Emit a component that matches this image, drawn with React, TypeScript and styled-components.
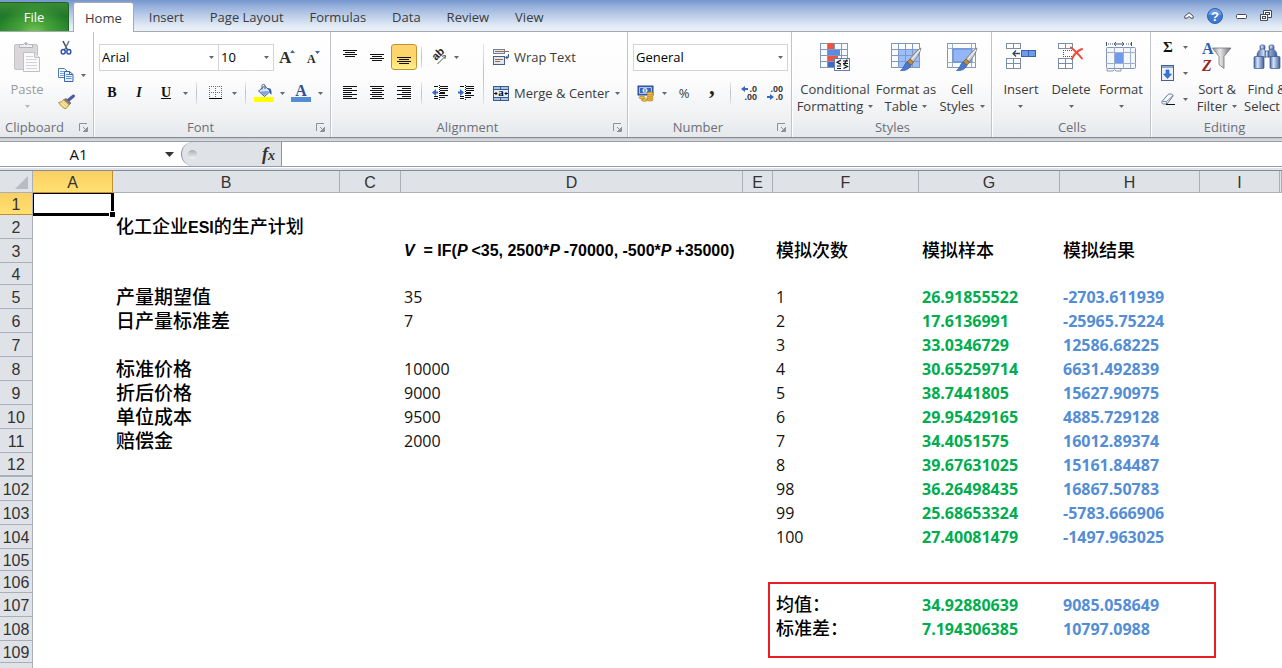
import React from 'react';
import styled, { createGlobalStyle, css } from 'styled-components';

const UI = '"Open Sans", "Noto Sans", sans-serif';
const SHEET = '"Liberation Sans", "Noto Sans CJK SC", sans-serif';
const CELL = '"Open Sans", "Noto Sans CJK SC", sans-serif';

const GlobalStyle = createGlobalStyle`
  *, *::before, *::after { box-sizing: border-box; }
  body { margin: 0; background: #fff; }
  button, input, select { font: inherit; color: inherit; margin: 0; padding: 0; border: 0; background: none; }
  svg { display: block; flex: none; overflow: visible; }
`;

const Window = styled.div`
  display: flex;
  flex-direction: column;
  height: 100vh;
  overflow: hidden;
  font-family: ${UI};
  font-size: 13px;
  color: #3b3b3b;
`;

/* ---------- tab strip ---------- */

const TabStrip = styled.header`
  display: flex;
  align-items: flex-end;
  height: 32px;
  flex: none;
  border-bottom: 1px solid #a6abb3;
  background: linear-gradient(#7597cf 0, #9db6de 8px, #c4d4ec 18px, #e6edf7 27px, #edf1f8 100%);
`;

const FileTab = styled.button`
  width: 69px;
  height: 29px;
  margin-right: 4px;
  border: 1px solid #1c6420;
  border-left: 0;
  border-bottom: 0;
  border-radius: 0 3px 0 0;
  color: #fff;
  background: radial-gradient(ellipse at 50% 120%, #86cf5e 0, #45a139 35%, rgba(63, 154, 53, 0) 75%),
    linear-gradient(#3b8a37, #22782a 45%, #2a8a2b);
`;

const Tab = styled.button<{ $active?: boolean }>`
  height: 29px;
  padding: 0 13px;
  ${(p) =>
    p.$active &&
    css`
      height: 30px;
      padding: 0 11px;
      margin-right: 2px;
      margin-bottom: -1px;
      border: 1px solid #a6abb3;
      border-bottom: 0;
      border-radius: 3px 3px 0 0;
      background: #fff;
    `}
`;

const WindowTools = styled.div`
  display: flex;
  align-items: center;
  height: 30px;
  margin-left: auto;
  padding-right: 4px;
`;

/* ---------- ribbon ---------- */

const Ribbon = styled.div`
  display: flex;
  flex: none;
  height: 106px;
  overflow: hidden;
  border-bottom: 1px solid #85898f;
  background: linear-gradient(#fff 0, #fcfcfd 50px, #eff1f3 85px, #e6e9ec 100%);
`;

const Group = styled.section<{ $width: number }>`
  display: flex;
  flex-direction: column;
  flex: none;
  width: ${(p) => p.$width}px;
  border-right: 1px solid #fff;
  box-shadow: inset -1px 0 #bfc4ca;
`;

const GroupBody = styled.div<{ $top: number; $left: number }>`
  display: flex;
  height: 86px;
  padding: ${(p) => `${p.$top}px 0 0 ${p.$left}px`};
`;

const GroupFooter = styled.footer<{ $launcher?: boolean }>`
  display: flex;
  align-items: center;
  gap: 12px;
  height: 18px;
  padding: 0 5px 0 ${(p) => (p.$launcher ? 4 : 5)}px;
  color: #6c6f78;
`;

const GroupTitle = styled.span`
  flex: 1;
  text-align: center;
`;

const LauncherButton = styled.button`
  display: grid;
  place-items: center;
  width: 12px;
  height: 12px;
`;

const Rows = styled.div<{ $gap?: number }>`
  display: flex;
  flex-direction: column;
  gap: ${(p) => p.$gap ?? 0}px;
`;

const ClipboardTools = styled(Rows)`
  gap: 1px;
  padding-top: 3px;
`;

const Row = styled.div`
  display: flex;
  align-items: center;
  height: 26px;
`;

const ToolButton = styled.button<{ $width?: number; $gapAfter?: boolean; $on?: boolean }>`
  display: grid;
  place-items: center;
  flex: none;
  width: ${(p) => p.$width ?? 26}px;
  height: 26px;
  margin-right: ${(p) => (p.$gapAfter ? 1 : 0)}px;
  ${(p) =>
    p.$on &&
    css`
      border: 1px solid #c29334;
      border-radius: 3px;
      background: linear-gradient(#fbd573, #fdd466 45%, #fff08c);
    `}
`;

const ArrowButton = styled.button`
  display: grid;
  place-items: center;
  flex: none;
  width: 10px;
  height: 26px;
`;

const Divider = styled.div<{ $before: number; $after: number; $height?: number }>`
  flex: none;
  width: 1px;
  height: ${(p) => p.$height ?? 22}px;
  margin: 0 ${(p) => p.$after}px 0 ${(p) => p.$before}px;
  background: linear-gradient(#e6e8eb, #b9bec6 50%, #e2e4e8);
`;

const FormatLetter = styled.span<{ $kind: 'bold' | 'italic' | 'underline' | 'symbol' }>`
  font: 700 14px/16px "Liberation Serif", serif;
  color: #111;
  ${(p) => p.$kind === 'italic' && 'font-style: italic;'}
  ${(p) => p.$kind === 'underline' && 'text-decoration: underline;'}
  ${(p) => p.$kind === 'symbol' && 'font-size: 15px;'}
`;

const ComboBox = styled.label<{ $width: number; $joined?: boolean }>`
  position: relative;
  display: flex;
  align-items: center;
  flex: none;
  width: ${(p) => p.$width}px;
  height: 27px;
  margin-left: ${(p) => (p.$joined ? -1 : 0)}px;
  border: 1px solid #d3d5d9;
  background: #fff;
  color: #000;

  select {
    appearance: none;
    width: 100%;
    height: 100%;
    padding: 0 16px 0 2px;
    outline: none;
  }
  svg {
    position: absolute;
    right: 4px;
    pointer-events: none;
  }
`;

const WideButton = styled.button`
  display: flex;
  align-items: center;
  gap: 5px;
  height: 26px;
  white-space: nowrap;
`;

const BigButton = styled.button<{ $width: number; $dim?: boolean }>`
  display: flex;
  flex-direction: column;
  align-items: center;
  gap: 9px;
  flex: none;
  width: ${(p) => p.$width}px;
  height: 74px;
  color: ${(p) => (p.$dim ? '#999ca1' : 'inherit')};
`;

const BigLabel = styled.span`
  display: flex;
  flex-direction: column;
  align-items: center;
  line-height: 17px;
  white-space: nowrap;
`;

const BigLine = styled.span`
  display: flex;
  align-items: center;
  gap: 5px;
  height: 17px;
`;

/* ---------- formula bar ---------- */

const Gutter = styled.div`
  flex: none;
  height: 3px;
  background: linear-gradient(#c3c6cb, #dcdfe4);
`;

const FormulaBar = styled.div`
  display: flex;
  flex: none;
  height: 26px;
  border-top: 1px solid #979ba3;
  border-bottom: 1px solid #979ba3;
`;

const NameBox = styled.div`
  display: flex;
  align-items: center;
  flex: none;
  width: 181px;
  font: 15px ${UI};
  color: #111;

  input {
    width: 157px;
    text-align: center;
    outline: none;
  }
`;

const NameArrow = styled.button`
  display: grid;
  place-items: center;
  width: 24px;
  height: 24px;
`;

const FunctionZone = styled.div`
  display: flex;
  align-items: center;
  justify-content: space-between;
  flex: none;
  width: 101px;
  padding: 0 6px;
  border: 1px solid #8f949c;
  border-width: 0 1px;
  border-radius: 13px 0 0 13px;
  background: #dfe2e7;
`;

const Knob = styled.span`
  width: 9px;
  height: 9px;
  border-radius: 50%;
  background: linear-gradient(#a9adb3, #f4f5f6);
`;

const FunctionButton = styled.button`
  font: italic 700 18px/20px "Liberation Serif", serif;
  color: #333;

  sub {
    font-size: 14px;
    line-height: 1px;
    vertical-align: baseline;
  }
`;

const FormulaInput = styled.input`
  flex: 1;
  min-width: 0;
  outline: none;
`;

const SheetEdge = styled.div`
  flex: none;
  height: 4px;
  border-top: 1px solid #fff;
  border-bottom: 1px solid #868a96;
  background: #dfe3ef;
`;

/* ---------- sheet ---------- */

const Sheet = styled.div`
  flex: 1;
  min-height: 0;
  overflow: hidden;
`;

const Grid = styled.table`
  width: 100%;
  table-layout: fixed;
  border-collapse: separate;
  border-spacing: 0;
  font: 16px/20px ${CELL};
  color: #111;

  th, td { padding: 0; text-align: left; font-weight: 400; }
`;

const HeadCell = styled.th<{ $current?: boolean; $axis: 'col' | 'row'; $folded?: boolean }>`
  && {
    padding-top: 2px;
    text-align: center;
    font-family: ${SHEET};
    line-height: 18px;
    color: #333;
    white-space: nowrap;
  }
  border-right: 1px solid ${(p) => (p.$current && p.$axis === 'col' ? '#c58f2c' : '#abafb6')};
  border-bottom: ${(p) => (p.$folded ? 2 : 1)}px solid ${(p) => (p.$current ? '#c58f2c' : '#abafb6')};
  background: ${(p) => (p.$current ? 'linear-gradient(#fbd062, #ffe070)' : '#dfe2e7')};
`;

const CornerMark = styled.svg`
  margin: 0 4px 0 auto;
`;

type Tone = 'plain' | 'green' | 'blue' | 'heading' | 'label' | 'formula';

const tones = {
  plain: css``,
  green: css`font-weight: 700; color: #00ad4e;`,
  blue: css`font-weight: 700; color: #538dd5;`,
  heading: css`font-family: ${SHEET}; font-size: 18px; font-weight: 500; color: #000;`,
  label: css`padding-top: 2px; font-family: ${SHEET}; font-size: 19px; font-weight: 500; color: #000;`,
  formula: css`font-family: ${SHEET}; font-weight: 700; color: #000;`,
};

const CellText = styled.div<{ $tone: Tone }>`
  padding-left: 3px;
  white-space: pre;
  line-height: 20px;
  ${(p) => tones[p.$tone]}
`;

const Latin = styled.b`
  font-size: 16px;
`;

const Anchor = styled.td`
  position: relative;
`;

const Selection = styled.div`
  position: absolute;
  inset: 0 -1px -1px 0;
  border: solid #000;
  border-width: 1px 3px 3px 1px;

  &::after {
    content: '';
    position: absolute;
    right: -4px;
    bottom: -4px;
    width: 6px;
    height: 6px;
    border: solid #fff;
    border-width: 1px 0 0 1px;
    background: #000;
  }
`;

const ResultFrame = styled.div`
  position: absolute;
  left: -5px;
  top: 11px;
  width: 448px;
  height: 76px;
  border: 2px solid #ec1c24;
  pointer-events: none;
`;

const Tr = styled.tr<{ $h: number }>`
  height: ${(p) => p.$h}px;
`;

/* ---------- drawings ---------- */

const Arrow = ({ color = '#666' }: { color?: string }) => (
  <svg width="5" height="3" viewBox="0 0 5 3" aria-hidden="true">
    <path d="M0 0h5L2.5 3z" fill={color} />
  </svg>
);

const LauncherIcon = () => (
  <svg width="9" height="9" viewBox="0 0 9 9" fill="none" stroke="#8d9096" aria-hidden="true">
    <path d="M.5 8V.5H8" />
    <path d="M8.500 4v4.500H4M4 4l3 3" />
    <path d="M5 7.500h3M7.500 5v3" />
  </svg>
);

const PasteIcon = () => (
  <svg width="28" height="30" viewBox="0 0 28 30" aria-hidden="true">
    <rect x="1.500" y="2.500" width="23" height="25" rx="1.500" fill="#d9d7da" stroke="#c3c1c4" />
    <path d="M6.500 5.500v-3h4a2.700 2.700 0 0 1 5 0h4v3z" fill="#f0f0f1" stroke="#b3b2b6" />
    <circle cx="13" cy="2" r="1.200" fill="#b3b2b6" />
    <path d="M10.500 10.500h11l5 5v14h-16z" fill="#fafafa" stroke="#bfbfc4" />
    <path d="M21.500 10.500v5h5" fill="#e6e6e8" stroke="#bfbfc4" />
    <path d="M13 14.500h7M13 17.500h11M13 20.500h11M13 23.500h11M13 26.500h11" stroke="#d2d2d7" />
  </svg>
);

const CutIcon = () => (
  <svg width="12" height="14" viewBox="0 0 12 14" fill="none" aria-hidden="true">
    <path d="M3 0l4.500 9" stroke="#3f4a5c" strokeWidth="1.500" />
    <path d="M9 0L4.500 9" stroke="#6b7688" strokeWidth="1.500" />
    <ellipse cx="3.200" cy="10.700" rx="2" ry="2.300" stroke="#2f55a8" strokeWidth="1.500" />
    <ellipse cx="8.800" cy="10.700" rx="2" ry="2.300" stroke="#2f55a8" strokeWidth="1.500" />
  </svg>
);

const CopyIcon = () => (
  <svg width="16" height="14" viewBox="0 0 16 14" aria-hidden="true">
    <path d="M.5.500h6l3 3v6h-9z" fill="#f2f7fe" stroke="#5279b8" />
    <path d="M2 3.500h4M2 5.500h6M2 7.500h6" stroke="#7ea3dd" />
    <path d="M6.500 3.500h5l3.500 3v7H6.500z" fill="#eaf2fd" stroke="#3563ac" />
    <path d="M8 6.500h3M8 8.500h5.500M8 10.500h5.500" stroke="#5f8cd3" />
    <path d="M11.500 3.500v3H15" fill="none" stroke="#3563ac" />
  </svg>
);

const PainterIcon = () => (
  <svg width="17" height="14" viewBox="0 0 17 14" aria-hidden="true">
    <path d="M15.500 1L10 5.500" stroke="#5158a8" strokeWidth="3" strokeLinecap="round" />
    <path d="M8 3.500l5 4.500-2 2-5.500-5z" fill="#7b7f88" stroke="#54565c" strokeWidth=".6" />
    <path d="M5.500 4.500l5.500 5c-.5 2-2.500 4-4 4.200C4.500 12.500 2 10 .5 7.500c2-.2 4-1 5-3z" fill="#f0d27c" stroke="#a5803a" strokeWidth=".8" />
    <path d="M3 8l4 4M5 6.800l4 3.700" stroke="#fdf3c4" />
  </svg>
);

const GrowFontIcon = ({ small }: { small?: boolean }) => (
  <svg width="16" height="18" viewBox="0 0 16 18" aria-hidden="true">
    <text x={small ? 1 : 0} y="15" fontFamily="Liberation Serif, serif" fontWeight="700" fontSize={small ? 12 : 17} fill="#2c2c2c">A</text>
    <path d={small ? 'M9 3h5l-2.500 3z' : 'M11 5h5l-2.500-3z'} fill="#3b63b5" />
  </svg>
);

const BorderIcon = () => (
  <svg width="14" height="14" viewBox="0 0 14 14" fill="none" aria-hidden="true">
    <path d="M0 .5h13M0 6.500h13M.5 0v12M6.500 0v12M12.500 0v12" stroke="#6b6b6b" strokeDasharray="1 1" />
    <path d="M0 12.500h13" stroke="#000" />
  </svg>
);

const FillIcon = () => (
  <svg width="20" height="18" viewBox="0 0 20 18" aria-hidden="true">
    <path d="M4.500 7l6-5 6 5-6 5.500z" fill="#d7e4f7" stroke="#405f94" />
    <path d="M6 7.500l9-.5-4.500 4.500z" fill="#7da5dd" />
    <path d="M8 5.500V1.500c0-1.500 3-1.500 3 0V5" fill="none" stroke="#51607b" />
    <path d="M14 4c2.500 0 4 2 3.500 6.500-1.500-.5-2-2-2.200-3.500z" fill="#2e5da9" />
    <rect y="13" width="20" height="5" fill="#ff0" />
  </svg>
);

const FontColorIcon = () => (
  <svg width="20" height="18" viewBox="0 0 20 18" aria-hidden="true">
    <text x="10" y="12" textAnchor="middle" fontFamily="Liberation Serif, serif" fontWeight="700" fontSize="16" fill="#2f4f8f">A</text>
    <rect y="13" width="20" height="5" fill="#538dd5" />
  </svg>
);

const lineSets = {
  top: 'M0 2.500h14M2 4.500h10M0 6.500h14M2 8.500h10',
  middle: 'M0 6.500h14M2 8.500h10M0 10.500h14M2 12.500h10',
  bottom: 'M0 9.500h14M2 11.500h10M0 13.500h14M2 15.500h10',
  left: 'M0 2.500h14M0 4.500h9M0 6.500h14M0 8.500h9M0 10.500h14M0 12.500h9M0 14.500h14',
  center: 'M0 2.500h14M2 4.500h10M0 6.500h14M2 8.500h10M0 10.500h14M2 12.500h10M0 14.500h14',
  right: 'M0 2.500h14M5 4.500h9M0 6.500h14M5 8.500h9M0 10.500h14M5 12.500h9M0 14.500h14',
};

const LinesIcon = ({ kind }: { kind: keyof typeof lineSets }) => (
  <svg width="14" height="18" viewBox="0 0 14 18" fill="none" stroke="#111" aria-hidden="true">
    <path d={lineSets[kind]} />
  </svg>
);

const OrientationIcon = () => (
  <svg width="16" height="16" viewBox="0 0 16 16" aria-hidden="true">
    <text x="0" y="0" transform="translate(5 12) rotate(-45)" fontFamily="Liberation Sans, sans-serif" fontWeight="700" fontSize="11" fill="#222">ab</text>
    <path d="M6.500 15L14 7.500M14.500 6.500l-3.500.7M14.500 6.500l-.6 3.500" stroke="#555" fill="none" />
  </svg>
);

const IndentIcon = ({ out }: { out?: boolean }) => (
  <svg width="16" height="18" viewBox="0 0 16 18" fill="none" aria-hidden="true">
    <path d="M2 2.500h4M8 2.500h8M8 4.500h8M8 6.500h8M8 8.500h5M8 9.500h5M8 11.500h8M2 12.500h4M8 13.500h5M2 14.500h4" stroke="#111" />
    <path d="M7.500 1v16" stroke="#111" strokeDasharray="1 1" />
    <path d={out ? 'M0 8.500l4-3.500v7z' : 'M6 8.500L2 5v7z'} fill="#3567c4" />
    <path d={out ? 'M3 8.500h3' : 'M0 8.500h3'} stroke="#3567c4" strokeWidth="2" />
  </svg>
);

const WrapIcon = () => (
  <svg width="16" height="16" viewBox="0 0 16 16" fill="none" aria-hidden="true">
    <rect x=".5" y=".5" width="11" height="4" fill="#dfe7f2" stroke="#6e819b" />
    <path d="M2 2.500h14" stroke="#a46a3c" />
    <rect x=".5" y="7.500" width="11" height="8" fill="#dfe7f2" stroke="#435f8c" />
    <path d="M2 10.500h8M2 12.500h5" stroke="#a46a3c" />
    <path d="M15.500 5v3.500H13" stroke="#3a5c94" />
    <path d="M12 8.500l2.500-2.300v4.600z" fill="#3a5c94" />
  </svg>
);

const MergeIcon = () => (
  <svg width="16" height="15" viewBox="0 0 16 15" aria-hidden="true">
    <rect x=".5" y=".5" width="15" height="14" fill="#a9c2e8" stroke="#3c5a8d" />
    <path d="M1 3.500h14M1 11.500h14M7.500 1v2.500M7.500 11.500V14" stroke="#3c5a8d" />
    <rect x="1" y="4" width="14" height="7" fill="#e4ecf8" />
    <text x="8" y="10" textAnchor="middle" fontFamily="Liberation Serif, serif" fontWeight="700" fontSize="11" fill="#111">a</text>
    <path d="M1 7.500h3M12 7.500h3M2.500 6L4 7.500 2.500 9M13.500 6L12 7.500 13.500 9" fill="none" stroke="#111" />
  </svg>
);

const CurrencyIcon = () => (
  <svg width="18" height="17" viewBox="0 0 18 17" aria-hidden="true">
    <rect x="1" y="1" width="15" height="9" fill="#3c68b8" stroke="#294b8c" />
    <path d="M2.500 2.500h12v6h-12z" fill="none" stroke="#a9c4ee" />
    <circle cx="8" cy="5.500" r="2.500" fill="#d7e4f8" />
    <path d="M8 4v3.500" stroke="#3c68b8" />
    <g fill="#f6c544" stroke="#a5731a" strokeWidth=".7">
      <ellipse cx="13" cy="14.500" rx="3" ry="1.500" />
      <ellipse cx="13" cy="12.500" rx="3" ry="1.500" />
      <ellipse cx="13" cy="10.500" rx="3" ry="1.500" />
      <ellipse cx="13" cy="8.500" rx="3" ry="1.500" />
      <ellipse cx="7.500" cy="15" rx="3" ry="1.300" />
      <ellipse cx="5" cy="12.500" rx="3" ry="1.300" />
    </g>
  </svg>
);

const CommaIcon = () => (
  <svg width="6" height="10" viewBox="0 0 6 10" aria-hidden="true">
    <text x="0" y="6" fontFamily="Liberation Serif, serif" fontWeight="700" fontSize="23" fill="#222">,</text>
  </svg>
);

const DecimalIcon = ({ less }: { less?: boolean }) => (
  <svg width="18" height="16" viewBox="0 0 18 16" aria-hidden="true">
    <g fontFamily="Liberation Sans, sans-serif" fontWeight="700" fontSize="9" fill="#333" textAnchor="end">
      <text x="16" y="7">{less ? '.00' : '.0'}</text>
      <text x="16" y="15">{less ? '.0' : '.00'}</text>
    </g>
    {less ? (
      <path d="M0 11h3V9l4 3-4 3v-2H0z" fill="#3567c4" />
    ) : (
      <path d="M7 3H4V1L0 4l4 3V5h3z" fill="#3567c4" />
    )}
  </svg>
);

const PaintBrush = () => (
  <g>
    <path d="M30 6c-3 1-8 7-11 11l3 3C26 16 29 11 30 6z" fill="#c9c9cd" stroke="#77777c" strokeWidth=".8" />
    <path d="M29 8l-8.500 9.500" stroke="#fff" />
    <path d="M19 17l3.500 3-2.500 3.500-4-3.500z" fill="#b98b45" stroke="#7b5523" strokeWidth=".7" />
    <path d="M16 20l4 3.500c-2 4-6 5.500-10.500 5C13 26.500 13 22 16 20z" fill="#4a7ad0" stroke="#2c54a0" strokeWidth=".7" />
  </g>
);

const ConditionalIcon = () => (
  <svg width="30" height="30" viewBox="0 0 30 30" aria-hidden="true">
    <rect x=".5" y="1.500" width="27" height="24" fill="#f8fafd" stroke="#8398b8" />
    <path d="M0 7.500h28M0 13.500h28M0 19.500h28M7.500 1v25M14.500 1v25M21.500 1v25" stroke="#8398b8" />
    <rect x="8" y="1" width="6" height="6" fill="#ee5340" />
    <rect x="8" y="8" width="12" height="5" fill="#5b8ae4" />
    <rect x="8" y="14" width="10" height="5" fill="#ee5340" />
    <rect x="8" y="20" width="6" height="5" fill="#3d6cc6" />
    <rect x="14.500" y="16.500" width="15" height="12" fill="#f6f9fd" stroke="#6480a8" />
    <path d="M21 18l-4 2.200 4 2.200M17 24h4M17 26.500h4M23 19h5M23 21.500h5M27 17.500l-3 5M23.500 22.500l4 2-4 2" fill="none" stroke="#111" strokeWidth="1.200" />
  </svg>
);

const FormatTableIcon = () => (
  <svg width="31" height="30" viewBox="0 0 31 30" aria-hidden="true">
    <rect x=".5" y="1.500" width="28" height="24" fill="#fbfcfe" stroke="#8398b8" />
    <rect x="8" y="8" width="20" height="17" fill="#9dbdf8" />
    <path d="M0 7.500h29M0 13.500h29M0 19.500h29M7.500 1v25M14.500 1v25M21.500 1v25" stroke="#7f9ac6" />
    <PaintBrush />
  </svg>
);

const CellStylesIcon = () => (
  <svg width="31" height="30" viewBox="0 0 31 30" aria-hidden="true">
    <rect x=".5" y="1.500" width="28" height="24" fill="#fbfcfe" stroke="#8398b8" />
    <path d="M0 6.500h29M0 20.500h29M5.500 1v25M24.500 1v25" stroke="#9aacc8" />
    <rect x="6" y="7" width="19" height="13" fill="#94b6f6" stroke="#5a86d6" />
    <PaintBrush />
  </svg>
);

const MiniGrid = ({ y, rows }: { y: number; rows: number }) => (
  <g fill="#fff" stroke="#7b8ea9">
    <rect x=".5" y={y} width="14" height={rows * 5} />
    <path d={`M7.500 ${y}v${rows * 5}${rows > 1 ? `M0 ${y + 5}h15` : ''}`} />
  </g>
);

const InsertCellsIcon = () => (
  <svg width="30" height="30" viewBox="0 0 30 30" aria-hidden="true">
    <MiniGrid y={1.5} rows={1} />
    <MiniGrid y={16.5} rows={2} />
    <rect x="15.500" y="8.500" width="14" height="6" fill="#6f9aeb" stroke="#3a61ab" />
    <path d="M22.500 8.500v6" stroke="#3a61ab" />
    <path d="M14 11.500H7M10 8.500l-3 3 3 3" fill="none" stroke="#3b4657" strokeWidth="1.300" />
  </svg>
);

const DeleteCellsIcon = () => (
  <svg width="26" height="30" viewBox="0 0 26 30" aria-hidden="true">
    <MiniGrid y={1.5} rows={1} />
    <MiniGrid y={16.5} rows={2} />
    <path d="M5 8.500h9M5 14.500h9M5.500 8v7" fill="none" stroke="#2b59b5" strokeDasharray="1 1" />
    <path d="M13 5.500c4 3 7 6 11 11M24 7c-5 2-8 5-10 10" fill="none" stroke="#ee4a35" strokeWidth="2" strokeLinecap="round" />
  </svg>
);

const FormatCellsIcon = () => (
  <svg width="31" height="30" viewBox="0 0 31 30" aria-hidden="true">
    <path d="M.5 0v4M25.500 0v4" stroke="#46546b" />
    <path d="M2 2h5M20 2h5" stroke="#46546b" strokeDasharray="1 1" />
    <path d="M8 2h10M10 0L8 2l2 2M16 0l2 2-2 2" fill="none" stroke="#46546b" />
    <rect x=".5" y="5.500" width="29" height="21" rx="1" fill="#f3f6fb" stroke="#8095b3" />
    <path d="M0 10.500h30M0 21.500h30M8.500 5v21M17.500 5v21M24.500 5v21" stroke="#9fb0c8" />
    <rect x="9" y="11" width="8" height="10" fill="#6f9bef" />
    <path d="M1 27v2h6l1.500-1.500L10 29h5v-2" fill="#fff" stroke="#8095b3" />
  </svg>
);

const FillDownIcon = () => (
  <svg width="14" height="16" viewBox="0 0 14 16" aria-hidden="true">
    <rect x=".5" y=".5" width="12" height="15" fill="#eaf1fb" stroke="#44628f" />
    <path d="M1 2h11" stroke="#8ba7d2" strokeWidth="2" />
    <path d="M5 5h3v4h2.500l-4 4.500L2.500 9H5z" fill="#3a72dc" stroke="#2454ab" strokeWidth=".6" />
  </svg>
);

const EraserIcon = () => (
  <svg width="14" height="13" viewBox="0 0 14 13" aria-hidden="true">
    <path d="M1 8.500L7 1.500c1-1 5.500-.5 5 1.500l-6 8H2.500C1 11 .5 9.500 1 8.500z" fill="#f6f8fc" stroke="#63769c" />
    <path d="M1.500 8.500H5.500L12 2.500M5.500 8.500v2.500" fill="none" stroke="#63769c" strokeWidth=".8" />
    <path d="M5 11.500h9" stroke="#111" />
  </svg>
);

const SortIcon = () => (
  <svg width="30" height="30" viewBox="0 0 30 30" aria-hidden="true">
    <defs>
      <linearGradient id="funnel">
        <stop offset="0" stopColor="#8d8d90" />
        <stop offset=".4" stopColor="#e9e9ea" />
        <stop offset="1" stopColor="#6d6d70" />
      </linearGradient>
    </defs>
    <path d="M10.500 6h18.500l-7 8.500v12l-5-4v-8z" fill="url(#funnel)" stroke="#77777a" strokeWidth=".8" />
    <g fontFamily="Liberation Serif, serif" fontWeight="700" fontSize="16">
      <text x="0" y="12" fill="#2d5cae">A</text>
      <text x="0" y="29" fontStyle="italic" fill="#97261f">Z</text>
    </g>
  </svg>
);

const FindIcon = () => (
  <svg width="28" height="30" viewBox="0 0 28 30" aria-hidden="true">
    <defs>
      <linearGradient id="barrel">
        <stop offset="0" stopColor="#4566a3" />
        <stop offset=".35" stopColor="#d6e3f7" />
        <stop offset="1" stopColor="#3c5d9c" />
      </linearGradient>
    </defs>
    <g fill="url(#barrel)" stroke="#3a578d" strokeWidth=".7">
      <rect x="7" y="3" width="5" height="5" rx="1.500" />
      <rect x="16" y="3" width="5" height="5" rx="1.500" />
      <path d="M4 14c0-4 2-6 4-7h3l2 3v5H4zM24 14c0-4-2-6-4-7h-3l-2 3v5h9z" />
      <rect x="12" y="9" width="4" height="6" />
      <rect x="1" y="14.500" width="10" height="12" rx="1" />
      <rect x="17" y="14.500" width="10" height="12" rx="1" />
    </g>
  </svg>
);

const CollapseIcon = () => (
  <svg width="10" height="8" viewBox="0 0 10 8" aria-hidden="true">
    <path d="M5 .700L9.200 4.200v2H7L5 4.500 3 6.200H.8v-2z" fill="#fff" stroke="#444b57" />
  </svg>
);

const HelpIcon = () => (
  <svg width="16" height="16" viewBox="0 0 16 16" aria-hidden="true">
    <circle cx="8" cy="8" r="7.500" fill="#3f7ad0" stroke="#2b5fae" />
    <path d="M1.500 7a6.500 6 0 0 1 13 0z" fill="#6b9ade" />
    <text x="8" y="13" textAnchor="middle" fontFamily="Liberation Sans, sans-serif" fontWeight="700" fontSize="13" fill="#fff">?</text>
  </svg>
);

const MinimizeIcon = () => (
  <svg width="11" height="5" viewBox="0 0 11 5" aria-hidden="true">
    <rect x=".5" y=".5" width="10" height="4" rx="1" fill="#fff" stroke="#444b57" />
  </svg>
);

const RestoreIcon = () => (
  <svg width="12" height="12" viewBox="0 0 12 12" aria-hidden="true">
    <path d="M3.500.500h8v7h-8z" fill="#fff" stroke="#444b57" />
    <rect x="5.500" y="2.500" width="4" height="2" fill="none" stroke="#444b57" />
    <path d="M.5 4.500h7v6h-7z" fill="#fff" stroke="#444b57" />
    <rect x="2.500" y="6.500" width="3" height="2" fill="none" stroke="#444b57" />
  </svg>
);

/* ---------- composed parts ---------- */

const Footer = ({ title, launcher }: { title: string; launcher?: boolean }) => (
  <GroupFooter $launcher={launcher}>
    <GroupTitle>{title}</GroupTitle>
    {launcher && (
      <LauncherButton aria-label={`${title} settings`}>
        <LauncherIcon />
      </LauncherButton>
    )}
  </GroupFooter>
);

const Menu = ({ label }: { label: string }) => (
  <ArrowButton aria-label={label}>
    <Arrow />
  </ArrowButton>
);

type BigProps = {
  icon: React.ReactNode;
  lines: string[];
  width: number;
  dim?: boolean;
};

const Big = ({ icon, lines, width, dim }: BigProps) => (
  <BigButton $width={width} $dim={dim}>
    {icon}
    <BigLabel>
      <BigLine>{lines[0]}</BigLine>
      <BigLine>
        {lines[1]}
        <Arrow color={dim ? '#b5b7ba' : undefined} />
      </BigLine>
    </BigLabel>
  </BigButton>
);

const Combo = ({ label, value, width, joined }: { label: string; value: string; width: number; joined?: boolean }) => (
  <ComboBox $width={width} $joined={joined}>
    <select aria-label={label} defaultValue={value}>
      <option>{value}</option>
    </select>
    <Arrow />
  </ComboBox>
);

const columns: [string, number][] = [
  ['A', 80], ['B', 227], ['C', 61], ['D', 342], ['E', 30], ['F', 146], ['G', 141], ['H', 140], ['I', 80],
];

type Entry = [React.ReactNode, Tone];
type SheetRow = { n: string; h: number; cells?: Record<string, Entry> };

const trial = (n: string, count: string, sample: string, result: string, extra: Record<string, Entry> = {}): SheetRow => ({
  n,
  h: 24,
  cells: { ...extra, F: [count, 'plain'], G: [sample, 'green'], H: [result, 'blue'] },
});

const param = (name: string, value: string): Record<string, Entry> => ({ B: [name, 'label'], D: [value, 'plain'] });

const rows: SheetRow[] = [
  { n: '1', h: 22 },
  { n: '2', h: 24, cells: { B: [<>化工企业<Latin>ESI</Latin>的生产计划</>, 'heading'] } },
  {
    n: '3',
    h: 24,
    cells: {
      D: [<><i>V</i>{'  = IF('}<i>P </i>{'<35, 2500*'}<i>P </i>{'-70000, -500*'}<i>P </i>+35000)</>, 'formula'],
      F: ['模拟次数', 'heading'],
      G: ['模拟样本', 'heading'],
      H: ['模拟结果', 'heading'],
    },
  },
  { n: '4', h: 22 },
  trial('5', '1', '26.91855522', '-2703.611939', param('产量期望值', '35')),
  trial('6', '2', '17.6136991', '-25965.75224', param('日产量标准差', '7')),
  trial('7', '3', '33.0346729', '12586.68225'),
  trial('8', '4', '30.65259714', '6631.492839', param('标准价格', '10000')),
  trial('9', '5', '38.7441805', '15627.90975', param('折后价格', '9000')),
  trial('10', '6', '29.95429165', '4885.729128', param('单位成本', '9500')),
  trial('11', '7', '34.4051575', '16012.89374', param('赔偿金', '2000')),
  trial('12', '8', '39.67631025', '15161.84487'),
  trial('102', '98', '36.26498435', '16867.50783'),
  trial('103', '99', '25.68653324', '-5783.666906'),
  trial('104', '100', '27.40081479', '-1497.963025'),
  { n: '105', h: 22 },
  { n: '106', h: 22 },
  { n: '107', h: 24, cells: { F: ['均值：', 'heading'], G: ['34.92880639', 'green'], H: ['9085.058649', 'blue'] } },
  { n: '108', h: 24, cells: { F: ['标准差：', 'heading'], G: ['7.194306385', 'green'], H: ['10797.0988', 'blue'] } },
  { n: '109', h: 22 },
  { n: '', h: 22 },
];

const SheetCell = ({ row, col }: { row: SheetRow; col: string }) => {
  if (row.n === '1' && col === 'A') return <Anchor><Selection /></Anchor>;
  if (row.n === '106' && col === 'F') return <Anchor><ResultFrame /></Anchor>;
  const entry = row.cells?.[col];
  return <td>{entry && <CellText $tone={entry[1]}>{entry[0]}</CellText>}</td>;
};

export default function App() {
  return (
    <Window>
      <GlobalStyle />
      <TabStrip>
        <FileTab>File</FileTab>
        <Tab $active>Home</Tab>
        {['Insert', 'Page Layout', 'Formulas', 'Data', 'Review', 'View'].map((name) => (
          <Tab key={name}>{name}</Tab>
        ))}
        <WindowTools>
          <ToolButton aria-label="Minimize the ribbon"><CollapseIcon /></ToolButton>
          <ToolButton aria-label="Help"><HelpIcon /></ToolButton>
          <ToolButton aria-label="Minimize window"><MinimizeIcon /></ToolButton>
          <ToolButton aria-label="Restore window" $width={24}><RestoreIcon /></ToolButton>
        </WindowTools>
      </TabStrip>

      <Ribbon>
        <Group $width={95}>
          <GroupBody $top={0} $left={0}>
            <GroupBody $top={10} $left={0}>
              <Big dim width={54} lines={['Paste', '']} icon={<PasteIcon />} />
            </GroupBody>
            <ClipboardTools>
              <Row><ToolButton $width={24} aria-label="Cut"><CutIcon /></ToolButton></Row>
              <Row>
                <ToolButton $width={24} aria-label="Copy"><CopyIcon /></ToolButton>
                <Menu label="Copy options" />
              </Row>
              <Row><ToolButton $width={24} aria-label="Format Painter"><PainterIcon /></ToolButton></Row>
            </ClipboardTools>
          </GroupBody>
          <Footer title="Clipboard" launcher />
        </Group>

        <Group $width={237}>
          <GroupBody $top={12} $left={4}>
            <Rows $gap={10}>
              <Row>
                <Combo label="Font" value="Arial" width={120} />
                <Combo label="Font size" value="10" width={56} joined />
                <ToolButton $gapAfter aria-label="Increase font size"><GrowFontIcon /></ToolButton>
                <ToolButton aria-label="Decrease font size"><GrowFontIcon small /></ToolButton>
              </Row>
              <Row>
                <ToolButton $gapAfter aria-label="Bold"><FormatLetter $kind="bold">B</FormatLetter></ToolButton>
                <ToolButton $gapAfter aria-label="Italic"><FormatLetter $kind="italic">I</FormatLetter></ToolButton>
                <ToolButton $gapAfter aria-label="Underline"><FormatLetter $kind="underline">U</FormatLetter></ToolButton>
                <Menu label="Underline options" />
                <Divider $before={6} $after={6} />
                <ToolButton aria-label="Bottom border"><BorderIcon /></ToolButton>
                <Menu label="Border options" />
                <Divider $before={6} $after={5} />
                <ToolButton aria-label="Fill color"><FillIcon /></ToolButton>
                <Menu label="Fill color options" />
                <ToolButton $width={28} aria-label="Font color"><FontColorIcon /></ToolButton>
                <Menu label="Font color options" />
              </Row>
            </Rows>
          </GroupBody>
          <Footer title="Font" launcher />
        </Group>

        <Group $width={297}>
          <GroupBody $top={12} $left={5}>
            <Rows $gap={10}>
              <Row>
                <ToolButton $gapAfter aria-label="Top align"><LinesIcon kind="top" /></ToolButton>
                <ToolButton $gapAfter aria-label="Middle align"><LinesIcon kind="middle" /></ToolButton>
                <ToolButton $on aria-label="Bottom align" aria-pressed="true"><LinesIcon kind="bottom" /></ToolButton>
                <Divider $before={4} $after={5} />
                <ToolButton $width={24} aria-label="Orientation"><OrientationIcon /></ToolButton>
                <Menu label="Orientation options" />
              </Row>
              <Row>
                <ToolButton $gapAfter aria-label="Align left"><LinesIcon kind="left" /></ToolButton>
                <ToolButton $gapAfter aria-label="Center"><LinesIcon kind="center" /></ToolButton>
                <ToolButton aria-label="Align right"><LinesIcon kind="right" /></ToolButton>
                <Divider $before={4} $after={5} />
                <ToolButton aria-label="Decrease indent"><IndentIcon out /></ToolButton>
                <ToolButton aria-label="Increase indent"><IndentIcon /></ToolButton>
              </Row>
            </Rows>
            <Divider $before={4} $after={9} $height={60} />
            <Rows $gap={10}>
              <WideButton><WrapIcon />Wrap Text</WideButton>
              <WideButton><MergeIcon />Merge &amp; Center<Arrow /></WideButton>
            </Rows>
          </GroupBody>
          <Footer title="Alignment" launcher />
        </Group>

        <Group $width={164}>
          <GroupBody $top={12} $left={4}>
            <Rows $gap={10}>
              <Row><Combo label="Number format" value="General" width={155} /></Row>
              <Row>
                <ToolButton aria-label="Accounting format"><CurrencyIcon /></ToolButton>
                <Menu label="Accounting options" />
                <ToolButton $width={30} aria-label="Percent style">%</ToolButton>
                <ToolButton aria-label="Comma style"><CommaIcon /></ToolButton>
                <Divider $before={5} $after={6} />
                <ToolButton aria-label="Increase decimal"><DecimalIcon /></ToolButton>
                <ToolButton aria-label="Decrease decimal"><DecimalIcon less /></ToolButton>
              </Row>
            </Rows>
          </GroupBody>
          <Footer title="Number" launcher />
        </Group>

        <Group $width={200}>
          <GroupBody $top={10} $left={5}>
            <Big width={74} lines={['Conditional', 'Formatting']} icon={<ConditionalIcon />} />
            <Big width={68} lines={['Format as', 'Table']} icon={<FormatTableIcon />} />
            <Big width={44} lines={['Cell', 'Styles']} icon={<CellStylesIcon />} />
          </GroupBody>
          <Footer title="Styles" />
        </Group>

        <Group $width={159}>
          <GroupBody $top={10} $left={3}>
            <Big width={50} lines={['Insert', '']} icon={<InsertCellsIcon />} />
            <Big width={50} lines={['Delete', '']} icon={<DeleteCellsIcon />} />
            <Big width={50} lines={['Format', '']} icon={<FormatCellsIcon />} />
          </GroupBody>
          <Footer title="Cells" />
        </Group>

        <Group $width={146}>
          <GroupBody $top={2} $left={4}>
            <Rows>
              <Row>
                <ToolButton $width={24} aria-label="Sum"><FormatLetter $kind="symbol">Σ</FormatLetter></ToolButton>
                <Menu label="Sum options" />
              </Row>
              <Row>
                <ToolButton $width={24} aria-label="Fill"><FillDownIcon /></ToolButton>
                <Menu label="Fill options" />
              </Row>
              <Row>
                <ToolButton $width={24} aria-label="Clear"><EraserIcon /></ToolButton>
                <Menu label="Clear options" />
              </Row>
            </Rows>
            <GroupBody $top={8} $left={4}>
              <Big width={46} lines={['Sort &', 'Filter']} icon={<SortIcon />} />
              <Big width={54} lines={['Find &', 'Select']} icon={<FindIcon />} />
            </GroupBody>
          </GroupBody>
          <Footer title="Editing" />
        </Group>
      </Ribbon>

      <Gutter />
      <FormulaBar>
        <NameBox>
          <input aria-label="Name box" defaultValue="A1" />
          <NameArrow aria-label="Named ranges">
            <svg width="9" height="5" viewBox="0 0 9 5" aria-hidden="true"><path d="M0 0h9L4.500 5z" fill="#333" /></svg>
          </NameArrow>
        </NameBox>
        <FunctionZone>
          <Knob />
          <FunctionButton aria-label="Insert function">f<sub>x</sub></FunctionButton>
        </FunctionZone>
        <FormulaInput aria-label="Formula" />
      </FormulaBar>
      <SheetEdge />

      <Sheet>
        <Grid>
          <colgroup>
            <col width={33} />
            {columns.map(([name, width]) => <col key={name} width={width} />)}
            <col />
          </colgroup>
          <thead>
            <Tr $h={22}>
              <HeadCell $axis="col" aria-label="Select all">
                <CornerMark width="13" height="13" viewBox="0 0 13 13"><path d="M13 0v13H0z" fill="#b9bdc3" /></CornerMark>
              </HeadCell>
              {columns.map(([name]) => (
                <HeadCell key={name} scope="col" $axis="col" $current={name === 'A'}>{name}</HeadCell>
              ))}
              <HeadCell $axis="col" />
            </Tr>
          </thead>
          <tbody>
            {rows.map((row) => (
              <Tr key={row.n} $h={row.h}>
                <HeadCell scope="row" $axis="row" $current={row.n === '1'} $folded={row.n === '12'}>{row.n}</HeadCell>
                {columns.map(([name]) => <SheetCell key={name} row={row} col={name} />)}
                <td />
              </Tr>
            ))}
          </tbody>
        </Grid>
      </Sheet>
    </Window>
  );
}
